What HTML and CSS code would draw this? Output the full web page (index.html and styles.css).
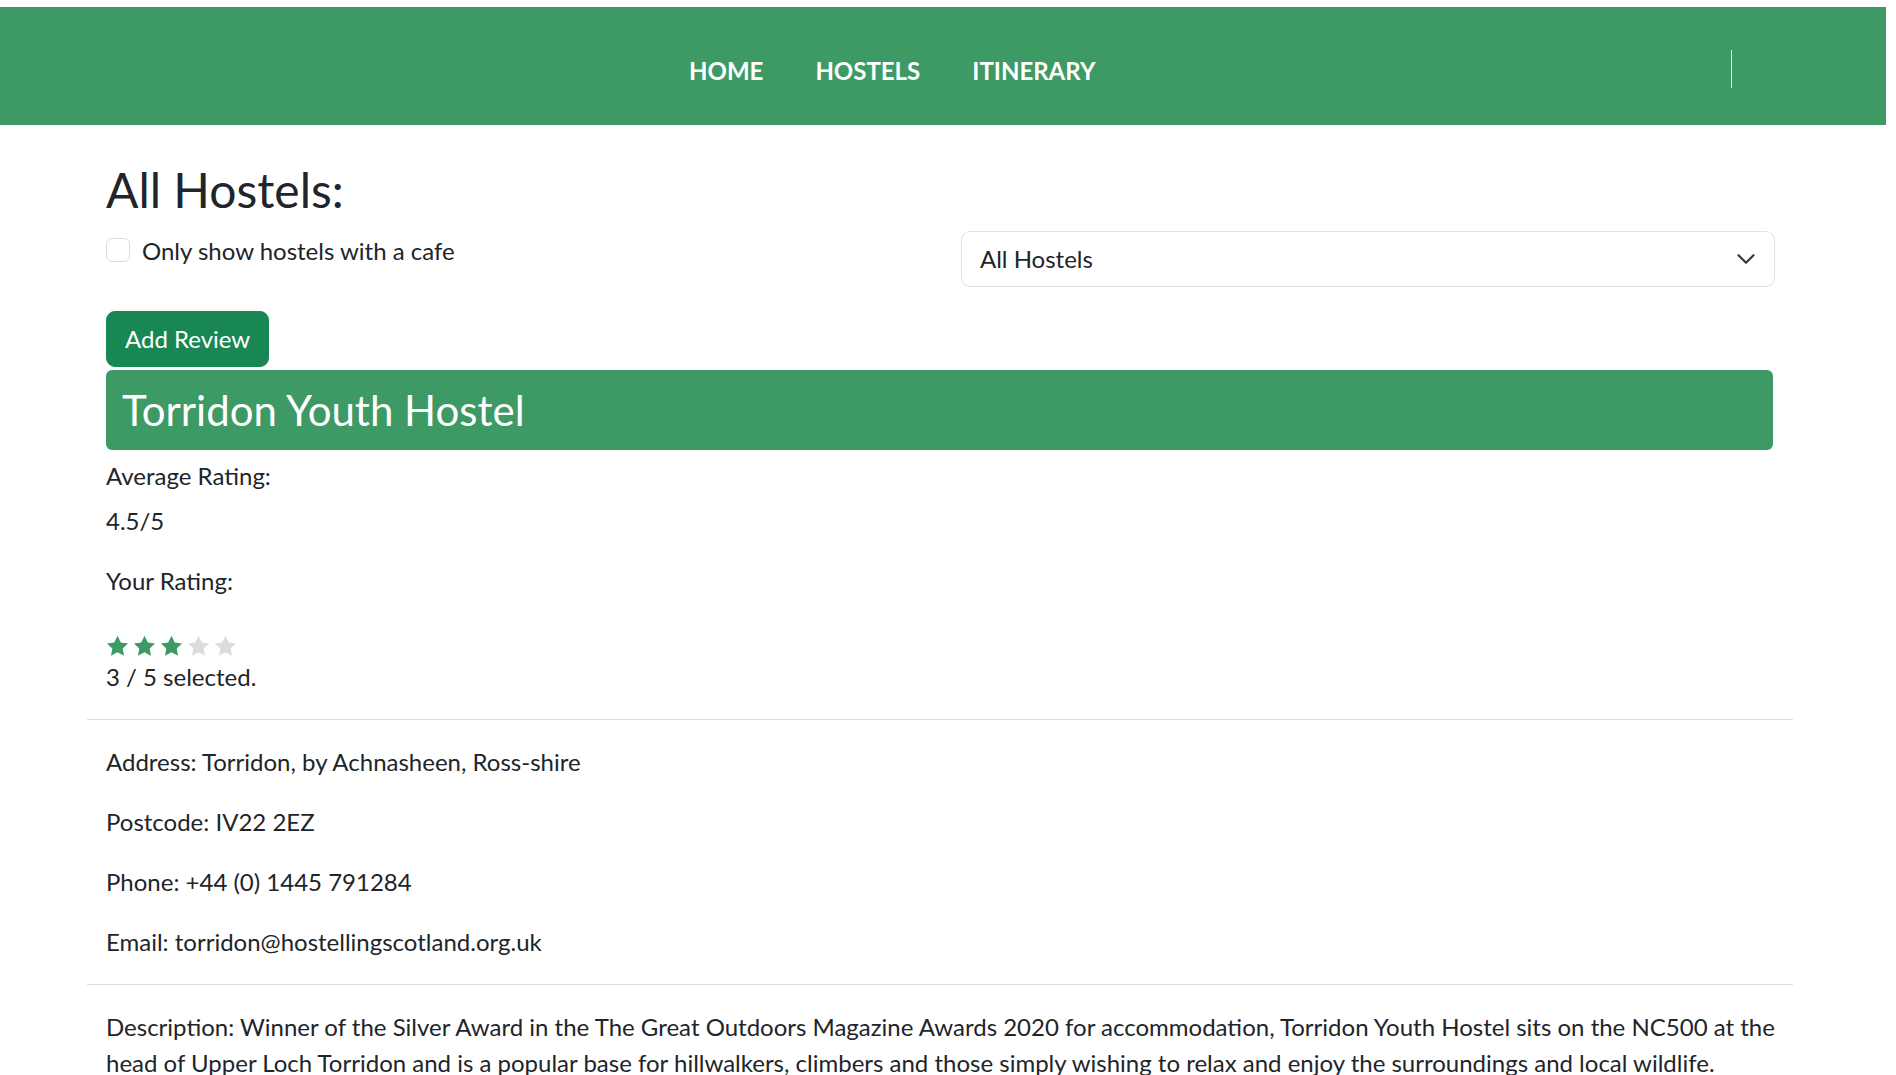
FILE: index.html
```html
<!DOCTYPE html>
<html lang="en">
<head>
<meta charset="utf-8">
<title>All Hostels</title>
<link rel="stylesheet" href="styles.css">
</head>
<body>
<nav class="navbar">
  <ul class="nav-links">
    <li><a href="#">HOME</a></li>
    <li><a href="#">HOSTELS</a></li>
    <li><a href="#">ITINERARY</a></li>
  </ul>
  <span class="divider"></span>
</nav>

<main class="main">
  <section class="pad top">
    <h2 class="page-title">All Hostels:</h2>
    <div class="filter-row">
      <div class="form-check">
        <span class="check-box"></span>
        <label class="check-label">Only show hostels with a cafe</label>
      </div>
      <div class="select">
        <span>All Hostels</span>
        <svg class="chevron" width="24" height="18" viewBox="0 0 16 12" aria-hidden="true"><path d="M3 3.5 8 8.5l5-5" fill="none" stroke="#343a40" stroke-width="1.5" stroke-linecap="round" stroke-linejoin="round"/></svg>
      </div>
    </div>
    <button class="btn">Add Review</button>
    <h3 class="hostel-bar">Torridon Youth Hostel</h3>
    <div class="avg-label">Average Rating:</div>
    <p class="avg-value">4.5/5</p>
    <p class="para">Your Rating:</p>
    <div class="stars">
      <svg class="star on" viewBox="0 0 24 24"><path d="M12 .8l3.4 7 7.6 1-5.6 5.3 1.4 7.6L12 18l-6.8 3.7 1.4-7.6L1 8.8l7.6-1z"/></svg>
      <svg class="star on" viewBox="0 0 24 24"><path d="M12 .8l3.4 7 7.6 1-5.6 5.3 1.4 7.6L12 18l-6.8 3.7 1.4-7.6L1 8.8l7.6-1z"/></svg>
      <svg class="star on" viewBox="0 0 24 24"><path d="M12 .8l3.4 7 7.6 1-5.6 5.3 1.4 7.6L12 18l-6.8 3.7 1.4-7.6L1 8.8l7.6-1z"/></svg>
      <svg class="star off" viewBox="0 0 24 24"><path d="M12 .8l3.4 7 7.6 1-5.6 5.3 1.4 7.6L12 18l-6.8 3.7 1.4-7.6L1 8.8l7.6-1z"/></svg>
      <svg class="star off" viewBox="0 0 24 24"><path d="M12 .8l3.4 7 7.6 1-5.6 5.3 1.4 7.6L12 18l-6.8 3.7 1.4-7.6L1 8.8l7.6-1z"/></svg>
    </div>
    <p class="para">3 / 5 selected.</p>
  </section>
  <hr class="rule">
  <section class="pad details">
    <p class="para">Address: Torridon, by Achnasheen, Ross-shire</p>
    <p class="para">Postcode: IV22 2EZ</p>
    <p class="para">Phone: +44 (0) 1445 791284</p>
    <p class="para">Email: torridon@hostellingscotland.org.uk</p>
  </section>
  <hr class="rule">
  <section class="pad details">
    <p class="para">Description: Winner of the Silver Award in the The Great Outdoors Magazine Awards 2020 for accommodation, Torridon Youth Hostel sits on the NC500 at the head of Upper Loch Torridon and is a popular base for hillwalkers, climbers and those simply wishing to relax and enjoy the surroundings and local wildlife.</p>
  </section>
</main>
</body>
</html>
```
FILE: styles.css
```css
* { box-sizing: border-box; }
html, body { margin: 0; padding: 0; background: #fff; }
body {
  font-family: Lato, "Open Sans", Arial, sans-serif;
  font-size: 24px;
  line-height: 1.5;
  color: #212529;
  overflow: hidden;
}

.navbar {
  margin-top: 7px;
  width: 1886px;
  height: 118px;
  background: #3d9a64;
  display: flex;
  align-items: flex-start;
  padding-top: 46px;
}
.nav-links {
  list-style: none;
  margin: 0 0 0 689px;
  padding: 0;
  display: flex;
  gap: 52px;
}
.nav-links a {
  color: #fff;
  text-decoration: none;
  font-weight: 700;
  font-size: 24px;
  line-height: 36px;
  display: block;
}
.divider {
  margin-left: auto;
  margin-right: 154px;
  margin-top: -3px;
  width: 1px;
  height: 38px;
  background: rgba(255, 255, 255, 0.85);
}

.main {
  margin-left: 87px;
  width: 1706px;
  padding-top: 36px;
}
.pad { padding: 0 18px 0 19px; }
.details { padding-top: 24px; }

.page-title {
  font-size: 48px;
  font-weight: 400;
  line-height: 1.2;
  margin: 0 0 12px;
}

.filter-row {
  display: grid;
  grid-template-columns: 1fr 1fr;
  column-gap: 41px;
  margin-bottom: 24px;
}
.form-check {
  display: flex;
  align-items: flex-start;
  padding-top: 2px;
}
.check-box {
  width: 24px;
  height: 24px;
  margin-top: 5px;
  border: 1px solid #d9dce0;
  border-radius: 6px;
  background: #fff;
  flex: none;
}
.check-label { margin-left: 12px; }

.select {
  height: 56px;
  border: 1px solid #dee2e6;
  border-radius: 9px;
  padding: 9px 16px 9px 18px;
  display: flex;
  align-items: center;
  justify-content: space-between;
}
.chevron { flex: none; }

.btn {
  display: block;
  font-family: inherit;
  font-size: 24px;
  line-height: 36px;
  color: #fff;
  background: #198754;
  border: 1px solid #198754;
  border-radius: 9px;
  padding: 9px 18px;
  margin: 0;
}

.hostel-bar {
  margin: 3px 2px 0 0;
  background: #3d9a64;
  color: #fff;
  font-size: 42px;
  font-weight: 400;
  line-height: 1.2;
  padding: 15px 16px;
  border-radius: 6px;
}

.avg-label { margin-top: 8px; }
.avg-value { margin: 9px 0 24px; }
.para { margin: 0 0 24px; }

.stars {
  display: flex;
  gap: 4px;
  padding-top: 12px;
  height: 36px;
}
.star { width: 23px; height: 23px; }
.star.on { fill: #3d9a64; }
.star.off { fill: #dcdcdc; }

.rule {
  margin: 0;
  border: 0;
  border-top: 1px solid #dcdde0;
  height: 0;
}
```
